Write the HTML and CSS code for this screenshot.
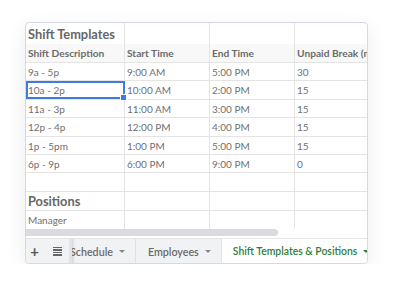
FILE: index.html
```html
<!DOCTYPE html>
<html>
<head>
<meta charset="utf-8">
<link rel="stylesheet" href="styles.css">
</head>
<body>
<div class="card">
  <div class="grid">
    <div class="row title-row">
      <div class="c c1 title">Shift Templates</div><div class="c c2"></div><div class="c c3"></div><div class="c c4"></div>
    </div>
    <div class="row head-row">
      <div class="c c1">Shift Description</div><div class="c c2">Start Time</div><div class="c c3">End Time</div><div class="c c4">Unpaid Break (min)</div>
    </div>
    <div class="row r18">
      <div class="c c1">9a - 5p</div><div class="c c2">9:00 AM</div><div class="c c3">5:00 PM</div><div class="c c4">30</div>
    </div>
    <div class="row r19">
      <div class="c c1 sel">10a - 2p<span class="handle"></span></div><div class="c c2">10:00 AM</div><div class="c c3">2:00 PM</div><div class="c c4">15</div>
    </div>
    <div class="row r18">
      <div class="c c1">11a - 3p</div><div class="c c2">11:00 AM</div><div class="c c3">3:00 PM</div><div class="c c4">15</div>
    </div>
    <div class="row r19">
      <div class="c c1">12p - 4p</div><div class="c c2">12:00 PM</div><div class="c c3">4:00 PM</div><div class="c c4">15</div>
    </div>
    <div class="row r18">
      <div class="c c1">1p - 5pm</div><div class="c c2">1:00 PM</div><div class="c c3">5:00 PM</div><div class="c c4">15</div>
    </div>
    <div class="row r18">
      <div class="c c1">6p - 9p</div><div class="c c2">6:00 PM</div><div class="c c3">9:00 PM</div><div class="c c4">0</div>
    </div>
    <div class="row r19">
      <div class="c c1"></div><div class="c c2"></div><div class="c c3"></div><div class="c c4"></div>
    </div>
    <div class="row r19">
      <div class="c c1 title">Positions</div><div class="c c2"></div><div class="c c3"></div><div class="c c4"></div>
    </div>
    <div class="row r18 last">
      <div class="c c1">Manager</div><div class="c c2"></div><div class="c c3"></div><div class="c c4"></div>
    </div>
  </div>
  <div class="scroll"><div class="thumb"></div></div>
  <div class="tabs">
    <div class="tool plus">+</div>
    <div class="tool menu"><span></span><span></span><span></span><span></span></div>
    <div class="tab-strip">
      <div class="tab first">Schedule <span class="arr"></span></div>
      <div class="tab">Employees <span class="arr"></span></div>
      <div class="tab active">Shift Templates &amp; Positions <span class="arr"></span></div>
    </div>
  </div>
</div>
</body>
</html>
```
FILE: styles.css
```css
html, body { margin: 0; padding: 0; background: #fff; }
body {
  padding: 22px 0 0 25px;
  font-family: Lato, "Liberation Sans", sans-serif;
}
.card {
  width: 341px;
  height: 240px;
  border: 1px solid #d5d9e4;
  border-radius: 4px;
  background: #fff;
  box-shadow: 0 6px 18px rgba(60, 70, 100, 0.10);
  overflow: hidden;
  display: flex;
  flex-direction: column;
}
.grid { display: flex; flex-direction: column; }
.row { display: flex; box-sizing: border-box; border-bottom: 1px solid #e4e4e4; }
.row.last { border-bottom: none; }
.title-row { height: 21px; border-bottom: none; }
.head-row { height: 19px; background: #f8f8f8; }
.r18 { height: 18px; }
.r19 { height: 19px; }
.c {
  box-sizing: border-box;
  border-right: 1px solid #e4e4e4;
  padding-left: 2px;
  font-size: 10px;
  color: #707070;
  display: flex;
  align-items: center;
  white-space: nowrap;
  overflow: hidden;
  position: relative;
}
.c1 { width: 99px; flex: none; }
.c2 { width: 85px; flex: none; }
.c3 { width: 85px; flex: none; }
.c4 { width: 80px; flex: none; border-right: none; }
.title { font-size: 12.8px; font-weight: 700; color: #666; }
.head-row .c { font-weight: 700; color: #6b6b6b; font-size: 10.2px; }
.sel { border: 2px solid #3f7be0; padding-left: 0; overflow: visible; }
.handle {
  position: absolute;
  right: -4px;
  bottom: -4px;
  width: 5px;
  height: 5px;
  background: #3f7be0;
  border: 1px solid #fff;
}
.scroll { height: 8px; flex: none; }
.thumb { width: 252px; height: 7px; background: #dadbde; border-radius: 0 4px 4px 0; }
.tabs {
  flex: 1;
  display: flex;
  align-items: stretch;
  background: #f1f2f4;
  border-top: 1px solid #e6e6e6;
  margin-top: 1px;
}
.tool { display: flex; align-items: center; justify-content: center; color: #555; flex: none; }
.plus { width: 15px; padding-left: 1px; font-size: 15px; font-weight: 700; }
.menu { width: 24px; flex-direction: column; gap: 1px; padding-left: 3px; }
.menu span { display: block; width: 9px; height: 1.5px; background: #666; }
.tab-strip {
  display: flex;
  flex: 1;
  overflow: hidden;
  border-left: 3px solid #e2e3e5;
  box-shadow: inset 3px 0 3px -2px rgba(0,0,0,0.15);
}
.tab {
  display: flex;
  align-items: center;
  font-size: 10.7px;
  font-weight: 600;
  color: #6a6a6a;
  padding: 0 10px 0 12px;
  white-space: nowrap;
  border-right: 1px solid #e0e1e3;
  flex: none;
}
.tab.first { margin-left: -2px; padding-left: 0; }
.tab.active { background: #fff; color: #2f7d3c; border-right: none; font-size: 10.4px; padding-left: 11px; }
.arr {
  display: inline-block;
  margin-left: 6px;
  width: 0; height: 0;
  border-left: 3px solid transparent;
  border-right: 3px solid transparent;
  border-top: 3px solid #888;
}
.tab.active .arr { border-top-color: #2f7d3c; }
```
